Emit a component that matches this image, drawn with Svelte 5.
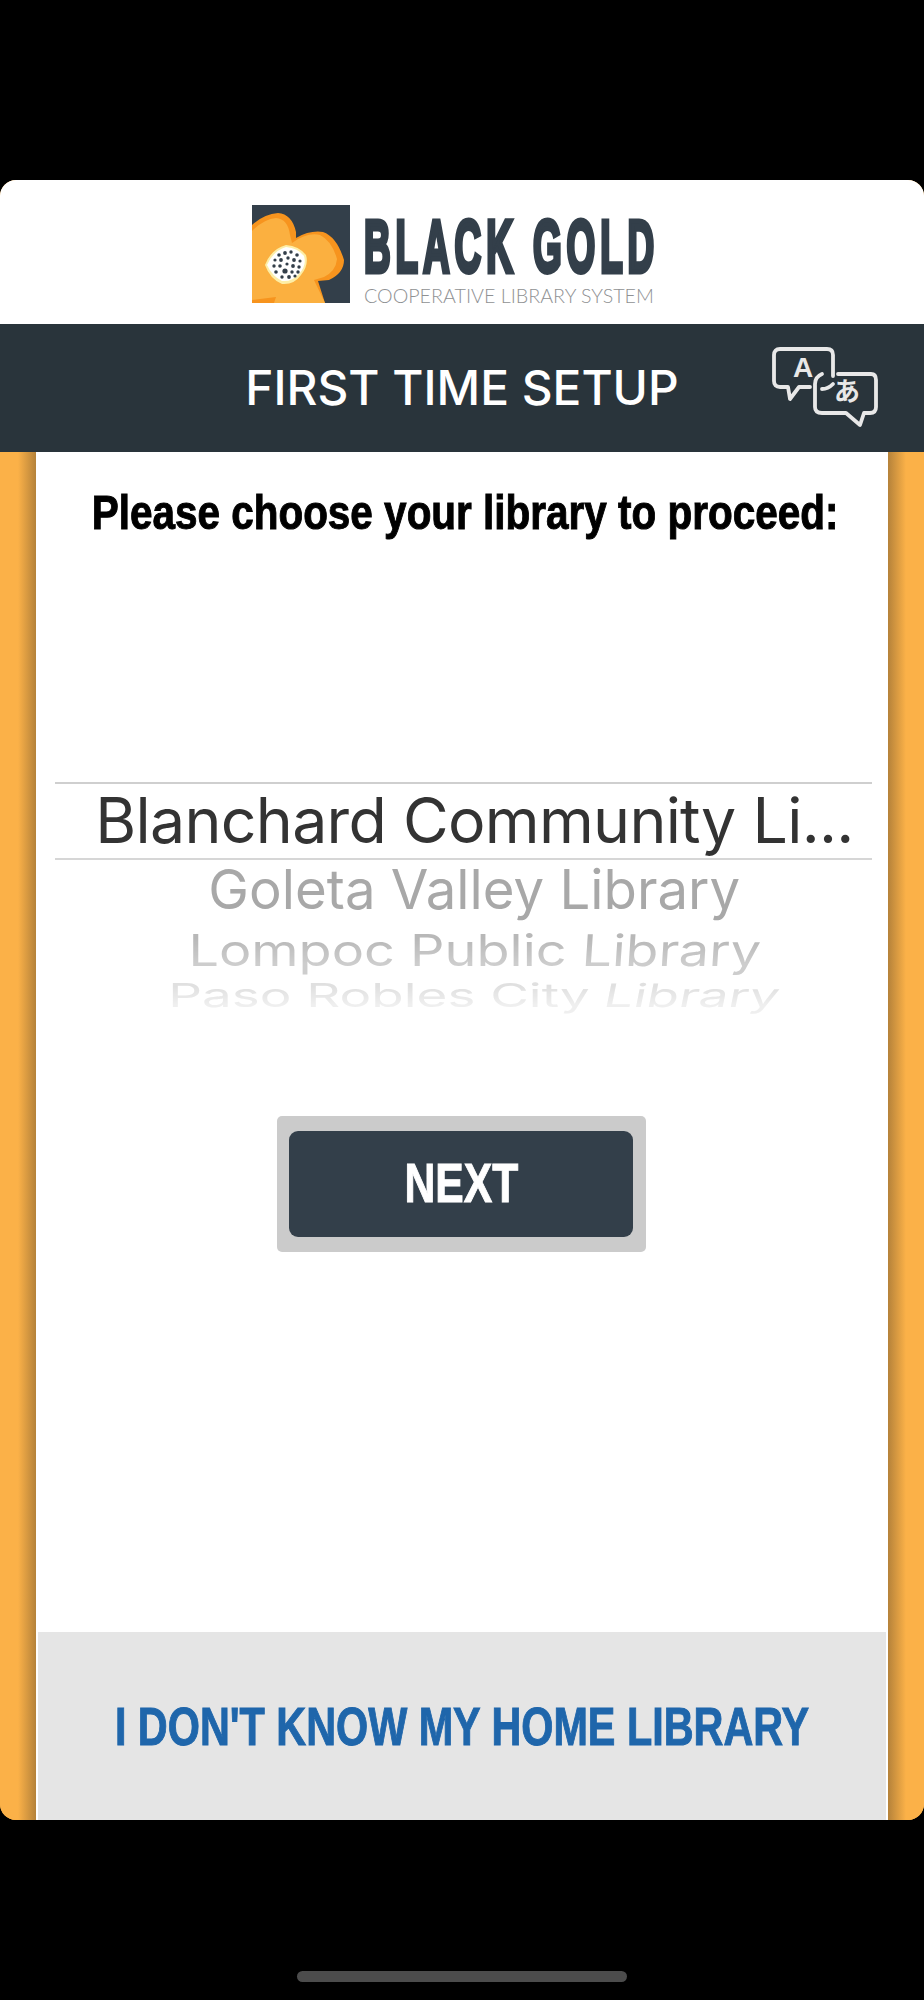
<script>
  const dots = [
    [27,50,1.8],[33,48,1.9],[39,47,1.7],[45,50,1.8],[23,55,1.6],[29,55,1.9],[36,53,1.7],[42,55,1.9],[48,56,1.6],
    [22,61,1.7],[28,61,1.8],[35,59,1.6],[41,61,1.9],[47,62,1.7],[24,67,1.8],[33,66,2.6],[40,67,1.7],[46,67,1.7],
    [30,72,1.7],[37,72,1.9],[43,71,1.6]
  ];
  const rows = [
    { place: 'Goleta Valley', cls: 'r1' },
    { place: 'Lompoc Public', cls: 'r2' },
    { place: 'Paso Robles City', cls: 'r3' }
  ];
</script>

<div class="screen">
  <div class="card">
    <header class="brand">
      <div class="logo">
        <svg class="flower" viewBox="0 0 98 98" aria-hidden="true">
          <rect width="98" height="98" fill="#333f4a" />
          <path fill="#f7941e" d="M0 20 Q12 9 26 8 Q40 9 44 27 L44 33 Q58 25 71 27 Q85 32 92 55 Q92 68 77 75 L66 76 L73 98 L0 98Z" />
          <path fill="#fbb040" d="M0 26 Q12 14 24 13 Q36 14 38 30 L40 38 Q55 27 68 30 Q80 36 85 54 Q84 66 72 72 L62 75 L73 98 L22 98 L24 92 L0 95Z" />
          <path fill="#fdeea6" d="M34 40 Q47 41 54 50 Q57 60 49 70 Q42 80 30 79 Q18 74 13 60 Q19 44 34 40Z" />
          <path fill="#fff" d="M34 42 Q46 43 52 51 Q55 60 47 69 Q40 77 30 76 Q20 71 15 60 Q21 46 34 42Z" />
          {#each dots as d}
            <circle cx={d[0]} cy={d[1]} r={d[2]} fill="#333f4a" />
          {/each}
        </svg>
        <div class="wordmark">
          <div class="big"><span>BLACK GOLD</span></div>
          <div class="small">COOPERATIVE LIBRARY SYSTEM</div>
        </div>
      </div>
    </header>

    <div class="titlebar">
      <h1>FIRST TIME SETUP</h1>
      <svg class="lang" viewBox="0 0 106 81" aria-hidden="true">
        <g fill="none" stroke="#e8e8e8" stroke-width="3.8" stroke-linejoin="round" stroke-linecap="round">
          <path d="M38 40 L27 40 L18 52 L16 40 L8 40 Q2 40 2 34 L2 8 Q2 2 8 2 L55 2 Q61 2 61 8 L61 29" />
          <path d="M66 27 L99 27 Q104 27 104 33 L104 60 Q104 66 98 66 L92 66 L88 78 L74 66 L50 66 Q43 66 43 60 L43 37 Q43 30 50 27" />
          <path d="M50 42 Q56 42 61 37" />
        </g>
        <text x="31" y="30" class="glyph">A</text>
        <text x="75" y="54" class="glyph jp">あ</text>
      </svg>
    </div>

    <div class="body">
      <main class="content">
        <div class="prompt"><p>Please choose your library to proceed:</p></div>

        <div class="picker">
          <div class="selected">Blanchard Community Li...</div>
          {#each rows as row}
            <div class="row {row.cls}"><span>{row.place} <em>Library</em></span></div>
          {/each}
        </div>

        <div class="btn-wrap">
          <button class="next"><span>NEXT</span></button>
        </div>

        <button class="unknown"><span>I DON'T KNOW MY HOME LIBRARY</span></button>
      </main>
    </div>
  </div>
  <div class="bottom">
    <div class="home-bar"></div>
  </div>
</div>

<style>
  :global(body) {
    background: #000;
  }

  .screen {
    width: 924px;
    height: 2000px;
    background: #000;
    padding-top: 180px;
    box-sizing: border-box;
    display: flex;
    flex-direction: column;
    overflow: hidden;
  }

  .card {
    height: 1640px;
    border-radius: 16px;
    overflow: hidden;
    display: flex;
    flex-direction: column;
    background: #fbb148;
  }

  .brand {
    height: 144px;
    background: #fff;
    display: flex;
    justify-content: center;
    align-items: flex-start;
    padding-top: 25px;
    box-sizing: border-box;
    flex-shrink: 0;
  }

  .logo {
    display: flex;
    gap: 14px;
    margin-right: 16px;
  }

  .flower {
    width: 98px;
    height: 98px;
    display: block;
  }

  .wordmark {
    width: 292px;
  }

  .big {
    padding-top: 6px;
    font-family: "Liberation Sans", sans-serif;
    font-weight: 700;
    font-size: 75px;
    line-height: 70px;
    color: #333f4a;
    white-space: nowrap;
  }

  .big span {
    display: block;
    width: max-content;
    letter-spacing: 10px;
    -webkit-text-stroke: 5px #333f4a;
    transform: scaleX(0.492);
    transform-origin: left center;
  }

  .small {
    margin-top: 4px;
    font-family: Lato, sans-serif;
    font-weight: 300;
    font-size: 19.7px;
    line-height: 22px;
    color: #8f9193;
    white-space: nowrap;
  }

  .titlebar {
    height: 128px;
    background: #29343b;
    display: grid;
    grid-template-columns: 1fr auto 1fr;
    align-items: center;
    flex-shrink: 0;
    position: relative;
  }

  h1 {
    grid-column: 2;
    margin: 0;
    font-family: Inter, sans-serif;
    font-weight: 500;
    font-size: 47.8px;
    color: #fff;
    white-space: nowrap;
  }

  .lang {
    position: absolute;
    left: 772px;
    top: 23px;
    width: 106px;
    height: 81px;
  }

  .glyph {
    font-family: "Liberation Sans", sans-serif;
    font-weight: 700;
    font-size: 28px;
    fill: #e8e8e8;
    text-anchor: middle;
  }

  .jp {
    font-family: "Noto Sans CJK JP", sans-serif;
    font-size: 26px;
  }

  .body {
    flex: 1;
    min-height: 0;
    padding: 0 36px;
    background: linear-gradient(90deg, #fbb148 0, #fbb148 18px, #b5823a 36px, transparent 36px, transparent 888px, #b5823a 888px, #fbb148 906px, #fbb148 100%);
    display: flex;
  }

  .content {
    width: 852px;
    background: #fff;
    display: flex;
    flex-direction: column;
  }

  .prompt {
    height: 330px;
    flex-shrink: 0;
    padding: 32px 0 0 6px;
    box-sizing: border-box;
    display: flex;
    justify-content: center;
  }

  .prompt p {
    margin: 0;
    height: 56px;
    font-family: "Liberation Sans", sans-serif;
    font-weight: 700;
    font-size: 49px;
    line-height: 56px;
    color: #000;
    white-space: nowrap;
    -webkit-text-stroke: 1px #000;
    transform: scaleX(0.826);
  }

  .picker {
    margin: 0 16px 0 19px;
    height: 334px;
    font-family: Inter, sans-serif;
    flex-shrink: 0;
  }

  .selected {
    height: 78px;
    box-sizing: border-box;
    border-top: 2px solid #cfcfcf;
    border-bottom: 2px solid #d6d6d6;
    padding-left: 22px;
    font-size: 62.6px;
    line-height: 73px;
    text-align: center;
    color: #333;
    white-space: nowrap;
    letter-spacing: -0.7px;
  }

  .row {
    display: flex;
    justify-content: center;
    padding-left: 22px;
    white-space: nowrap;
  }

  .row span {
    display: block;
    height: 80px;
    margin-top: -10px;
    font-size: 54px;
    line-height: 80px;
  }

  .row em {
    display: inline-block;
    font-style: normal;
  }

  .r1 {
    height: 66px;
    color: #a8a8a8;
  }

  .r1 span {
    transform: scale(1.01, 1.02);
  }

  .r2 {
    height: 50px;
    color: #b8b8b8;
  }

  .r2 span {
    margin-top: -15px;
    -webkit-mask-image: linear-gradient(#000 30%, rgba(0, 0, 0, 0.7) 70%);
    mask-image: linear-gradient(#000 30%, rgba(0, 0, 0, 0.7) 70%);
    transform: scale(1, 0.81);
  }

  .r2 em {
    transform: skewX(-3deg);
  }

  .r3 {
    height: 40px;
    color: #e0e0e0;
  }

  .r3 span {
    margin-top: -20px;
    -webkit-mask-image: linear-gradient(#000 30%, rgba(0, 0, 0, 0.5) 70%);
    mask-image: linear-gradient(#000 30%, rgba(0, 0, 0, 0.5) 70%);
    transform: scale(0.98, 0.6);
  }

  .r3 em {
    transform: skewX(-7deg);
  }

  .btn-wrap {
    margin: 0 auto;
    padding: 15px 13px 15px 12px;
    background: #cbcbcb;
    border-radius: 5px;
    transform: translateX(-1px);
  }

  .next {
    display: block;
    width: 344px;
    height: 106px;
    padding: 0 0 3px 2px;
    border: 0;
    border-radius: 9px;
    background: #333f4a;
    color: #fff;
    font-family: "Liberation Sans", sans-serif;
    font-weight: 700;
    font-size: 55px;
  }

  .next span {
    display: inline-block;
    transform: scaleX(0.775);
    -webkit-text-stroke: 1px #fff;
  }

  .unknown {
    margin: auto 2px 0;
    height: 188px;
    border: 0;
    padding: 0;
    background: #e5e5e5;
    color: #1f66ab;
    font-family: "Liberation Sans", sans-serif;
    font-weight: 700;
    font-size: 53px;
    white-space: nowrap;
    display: flex;
    justify-content: center;
    align-items: center;
  }

  .unknown span {
    transform: scaleX(0.78);
    -webkit-text-stroke: 1px #1f66ab;
  }

  .bottom {
    flex: 1;
    display: flex;
    justify-content: center;
    padding-top: 151px;
  }

  .home-bar {
    width: 330px;
    height: 11px;
    border-radius: 6px;
    background: #4c4c4c;
  }
</style>
